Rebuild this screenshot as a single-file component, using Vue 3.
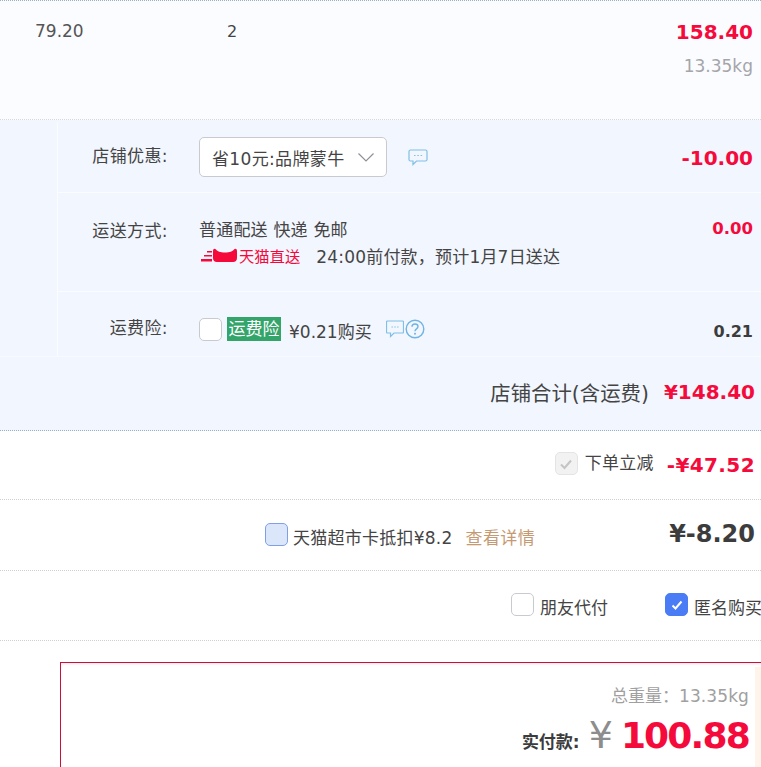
<script setup>
</script>

<template>
  <div class="page">
    <section class="item">
      <div class="price">79.20</div>
      <div class="qty">2</div>
      <div class="item-sum">
        <div class="red amt">158.40</div>
        <div class="weight">13.35kg</div>
      </div>
    </section>

    <section class="shop">
      <div class="opts">
        <div class="opt opt-coupon">
          <div class="label">店铺优惠:</div>
          <div class="main center">
            <div class="select">
              <span class="select-text">省10元:品牌蒙牛</span>
              <svg class="chev" width="18" height="11" viewBox="0 0 18 11"><path d="M1.500 1.500 9 9l7.500-7.500" fill="none" stroke="#8d9097" stroke-width="1.200"/></svg>
            </div>
            <svg class="bubble" width="20" height="17" viewBox="0 0 20 17"><path d="M2.500 1h15A1.500 1.500 0 0 1 19 2.500v8a1.500 1.500 0 0 1-1.500 1.500H8.500L5 15.500V12H2.500A1.500 1.500 0 0 1 1 10.500v-8A1.500 1.500 0 0 1 2.500 1z" fill="none" stroke="#7fc0e6" stroke-width="1.200"/><path d="M6 6.500h1.500M9.300 6.500h1.500M12.600 6.500h1.500" stroke="#7fc0e6" stroke-width="1.200"/></svg>
          </div>
          <div class="red amt coupon-amt">-10.00</div>
        </div>
        <div class="opt opt-ship">
          <div class="label">运送方式:</div>
          <div class="main col">
            <div class="ship-line">普通配送 快递 免邮</div>
            <div class="ship-line2">
              <svg class="cat" width="38" height="16" viewBox="0 0 38 16"><path d="M7 4h5v1.500H7zM4 8h8v1.500H4zM1 12h11v2.500H1z" fill="#f5093b"/><path d="M13 4C13 1.500 15 1 16 2.500 17.500 4.500 20 5.500 25 5.500S32.500 4.500 34 2.500C35 1 37 1.500 37 4V11C37 13.500 35.500 15 33 15H17C14.500 15 13 13.500 13 11Z" fill="#f5093b"/></svg>
              <span class="tmall">天猫直送</span>
              <span class="eta">24:00前付款，预计1月7日送达</span>
            </div>
          </div>
          <div class="red ship-amt">0.00</div>
        </div>
        <div class="opt opt-ins">
          <div class="label">运费险:</div>
          <div class="main center">
            <span class="box"></span>
            <span class="tag">运费险</span>
            <span class="ins-price">¥0.21购买</span>
            <svg class="bubble2" width="18" height="18" viewBox="0 0 18 18"><path d="M1.500 1h15A1 1 0 0 1 17.500 2v10a1 1 0 0 1-1 1H8l-3.500 3.500V13h-3a1 1 0 0 1-1-1V2a1 1 0 0 1 1-1z" fill="none" stroke="#7fc0e6" stroke-width="1.200"/><path d="M5.500 7h1.400M8.300 7h1.400M11.100 7h1.400" stroke="#7fc0e6" stroke-width="1.200"/></svg>
            <svg class="help" width="20" height="20" viewBox="0 0 20 20"><circle cx="10" cy="10" r="8.800" fill="none" stroke="#6fb4e3" stroke-width="1.400"/><path d="M7 7.800C7 5.800 8.400 5 10 5c1.700 0 3 1 3 2.600 0 2.200-3 2.400-3 4.600" fill="none" stroke="#6fb4e3" stroke-width="1.400"/><circle cx="10" cy="14.800" r="1" fill="#6fb4e3"/></svg>
          </div>
          <div class="ins-amt">0.21</div>
        </div>
      </div>
      <div class="shop-total">
        <span class="total-label">店铺合计(含运费)</span>
        <span class="red total-amt">¥148.40</span>
      </div>
    </section>

    <div class="row row-discount">
      <span class="box disabled"><svg width="14" height="12" viewBox="0 0 14 12"><path d="M2 6.500 5.500 10 12 2.500" fill="none" stroke="#c4c4c4" stroke-width="2"/></svg></span>
      <span class="disc-label">下单立减</span>
      <span class="red disc-amt">-¥47.52</span>
    </div>

    <div class="row row-card">
      <span class="box blue"></span>
      <span class="card-label">天猫超市卡抵扣¥8.2</span>
      <span class="detail">查看详情</span>
      <span class="card-amt">¥-8.20</span>
    </div>

    <div class="row row-extra">
      <span class="box"></span>
      <span class="extra-label friend">朋友代付</span>
      <span class="box checked"><svg width="14" height="12" viewBox="0 0 14 12"><path d="M2.500 6.500 5.500 9.500 11.500 2.500" fill="none" stroke="#fff" stroke-width="2"/></svg></span>
      <span class="extra-label anon">匿名购买</span>
    </div>

    <section class="pay">
      <div class="pay-box">
        <div class="pay-inner">
          <div class="pay-weight">总重量：<span class="num">13.35kg</span></div>
          <div class="pay-line">
            <span class="pay-label">实付款:</span>
            <span class="yen">¥</span>
            <span class="red pay-amt">100.88</span>
          </div>
        </div>
        <div class="pay-strip"></div>
      </div>
    </section>
  </div>
</template>

<style>
html, body { margin: 0; background: #fff; }
</style>

<style scoped>
.page {
  width: 761px;
  height: 767px;
  overflow: hidden;
  color: #3c3c3c;
  font-family: "DejaVu Sans", Verdana, "Noto Sans CJK SC", sans-serif;
  font-size: 17px;
  background: #fff;
}
.red { color: #f50a3c; font-weight: 700; }
.item {
  height: 118px;
  border-top: 1px dotted #9bb0c2;
  background: #fbfcff;
  border-bottom: 1px dotted #d5d9de;
  display: flex;
}
.price { width: 100px; padding-left: 35px; padding-top: 20px; font-size: 17px; line-height: 20px; color: #555; }
.qty { margin-left: 92px; padding-top: 21px; line-height: 20px; font-size: 16px; color: #444; }
.item-sum { margin-left: auto; padding-right: 8px; text-align: right; padding-top: 19px; }
.amt { font-size: 20px; line-height: 24px; }
.weight { font-size: 17px; line-height: 20px; margin-top: 12px; color: #a5a5a9; }
.shop { background: #f2f6fe; padding-top: 2px; border-bottom: 1px dotted #9bb0c2; }
.opts { margin-left: 57px; border-left: 1px solid #fafcff; }
.opt { display: flex; border-bottom: 1px solid #fbfcff; box-sizing: border-box; }
.opt-coupon { height: 71px; align-items: center; }
.opt-ship { height: 99px; padding-top: 27px; }
.opt-ins { height: 64px; padding-top: 25px; border-bottom: 0; }
.label { width: 110px; text-align: right; color: #444; line-height: 22px; flex: none; letter-spacing: .4px; }
.opt-coupon .label { margin-top: -2px; }
.main { margin-left: 31px; flex: 1; }
.center { display: flex; align-items: center; }
.opt-ins .center { height: 26px; margin-top: -1px; }
.select {
  width: 188px;
  height: 40px;
  box-sizing: border-box;
  background: #fff;
  border: 1px solid #c8cad0;
  border-radius: 5px;
  display: flex;
  align-items: center;
  padding: 0 11px 0 12px;
  justify-content: space-between;
  color: #444;
  white-space: nowrap;
}
.select-text { letter-spacing: .35px; }
.bubble { margin-left: 21px; }
.coupon-amt { margin-right: 8px; margin-top: 2px; }
.ship-line { line-height: 22px; color: #444; margin-top: -1px; letter-spacing: .2px; }
.ship-line2 { display: flex; align-items: center; height: 22px; margin-top: 3px; margin-left: 1px; }
.tmall { color: #f5093b; font-size: 15.300px; white-space: nowrap; margin-left: 1px; }
.eta { margin-left: 16px; color: #444; white-space: nowrap; letter-spacing: .2px; }
.ship-amt { font-size: 16.500px; line-height: 20px; margin-right: 8px; margin-top: -1px; }
.box {
  width: 23px;
  height: 23px;
  box-sizing: border-box;
  border: 1px solid #c8cad0;
  border-radius: 5px;
  background: #fff;
  display: inline-flex;
  align-items: center;
  justify-content: center;
  flex: none;
}
.tag { background: #34a56a; color: #fff; margin-left: 5px; line-height: 24px; height: 24px; width: 54px; text-align: center; margin-top: 0; white-space: nowrap; }
.ins-price { margin-left: 8px; color: #444; white-space: nowrap; margin-top: 3px; }
.bubble2 { margin-left: 14px; }
.help { margin-left: 1px; }
.ins-amt { font-weight: 700; font-size: 16px; color: #3c3c3c; margin-right: 8px; line-height: 20px; padding-top: 5px; }
.shop-total {
  height: 74px;
  display: flex;
  align-items: center;
  justify-content: flex-end;
  padding-right: 6px;
  border-top: 1px solid #f8faff;
  box-sizing: border-box;
}
.total-label { font-size: 20.400px; color: #444; margin-top: -4px; }
.total-amt { font-size: 20px; margin-left: 15px; margin-top: -4px; }
.row {
  display: flex;
  align-items: center;
  justify-content: flex-end;
  border-bottom: 1px dotted #cfcfcf;
  box-sizing: border-box;
  white-space: nowrap;
}
.row-discount { height: 69px; padding-right: 6px; }
.disabled { background: #f2f2f2; border-color: #e4e4e4; margin-top: -3px; }
.disc-label { margin-left: 7px; margin-right: 13px; color: #444; margin-top: -8px; letter-spacing: .25px; }
.disc-amt { font-size: 20px; letter-spacing: .4px; }
.row-card { height: 71px; padding-right: 6px; }
.blue { background: #dce6fb; border-color: #7f9fe6; margin-top: -1px; }
.card-label { margin-left: 5px; color: #444; margin-top: 2px; letter-spacing: .25px; }
.detail { margin-left: 13px; color: #c59a72; margin-top: 2px; letter-spacing: .4px; }
.card-amt { font-size: 24px; font-weight: 700; color: #3c3c3c; margin-left: 134px; margin-top: -2px; }
.row-extra { height: 70px; justify-content: flex-start; padding-left: 511px; }
.friend { margin-left: 6px; }
.checked { background: #4a7cf6; border-color: #4a7cf6; margin-left: 57px; }
.anon { margin-left: 6px; }
.row-extra .box { margin-top: -2px; }
.extra-label { color: #444; margin-top: 2px; }
.pay { margin: 21px 0 0 60px; }
.pay-box {
  width: 760px;
  height: 130px;
  box-sizing: border-box;
  border: 1px solid #c8103a;
  border-bottom: 0;
  box-shadow: inset 0 3px 3px -2px #fbe3e6;
  display: flex;
}
.pay-inner { width: 694px; flex: none; padding: 22px 6px 0 0; box-sizing: border-box; text-align: right; }
.pay-weight { color: #a0a0a0; line-height: 22px; }
.num { letter-spacing: .1px; }
.pay-line { display: flex; align-items: baseline; justify-content: flex-end; margin-top: 6px; white-space: nowrap; }
.pay-label { font-weight: 700; color: #3c3c3c; }
.yen { font-size: 38px; color: #8d8d8d; margin-left: 9px; font-weight: 400; line-height: 44px; }
.pay-amt { font-size: 36px; margin-left: 8px; line-height: 44px; letter-spacing: -1.800px; }
.pay-strip { width: 6px; background: #fff4ea; margin-top: 4px; flex: none; }
</style>
